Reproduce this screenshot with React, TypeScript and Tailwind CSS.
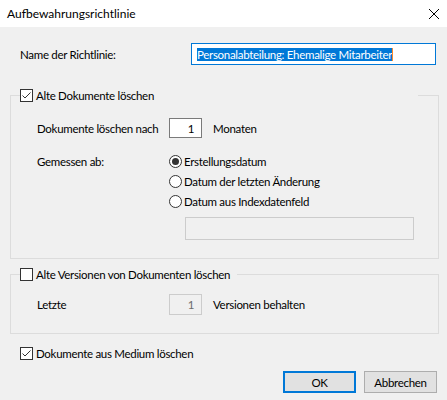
import type { ReactNode } from "react";

// Windows 10 style dialog, Segoe UI 9pt approximated with Lato.
const FONT = "font-[family-name:Lato,'Liberation_Sans',sans-serif]";

function CheckBox({ checked }: { checked?: boolean }) {
  return (
    <span className="flex size-[13px] shrink-0 items-center justify-center border border-[#333333] bg-white">
      {checked && (
        <svg width="11" height="11" viewBox="0 0 11 11" fill="none">
          <path d="M1.5 5.5 L4 8 L9.5 2.5" stroke="#333333" strokeWidth="1" />
        </svg>
      )}
    </span>
  );
}

function Radio({ checked, label }: { checked?: boolean; label: string }) {
  return (
    <div className="flex h-[20px] items-center gap-[2px]">
      <span className="flex size-[13px] shrink-0 items-center justify-center rounded-full border border-[#333333] bg-white">
        {checked && <span className="size-[7px] rounded-full bg-[#333333]" />}
      </span>
      <span>{label}</span>
    </div>
  );
}

function SpinBox({ value, disabled }: { value: string; disabled?: boolean }) {
  return (
    <div
      className={
        disabled
          ? "flex h-[21px] w-[33px] items-center justify-end border border-[#cccccc] bg-[#f0f0f0] pr-[7px] text-[#6d6d6d]"
          : "flex h-[20px] w-[33px] items-center justify-end border border-[#7a7a7a] bg-white pr-[7px]"
      }
    >
      {value}
    </div>
  );
}

function Group({
  label,
  checked,
  legendWidth,
  height,
  className,
  children,
}: {
  label: string;
  checked?: boolean;
  legendWidth: string;
  height: string;
  className?: string;
  children: ReactNode;
}) {
  return (
    <fieldset className={`border border-[#dcdcdc] ${height} ${className ?? ""}`}>
      <legend className={`ml-[9px] ${legendWidth}`}>
        <div className="flex h-[14px] items-center gap-[3px]">
          <CheckBox checked={checked} />
          <span>{label}</span>
        </div>
      </legend>
      <div className="pl-[26px]">{children}</div>
    </fieldset>
  );
}

export default function App() {
  return (
    <div className={`h-[400px] w-[447px] whitespace-nowrap bg-[#f0f0f0] text-black ${FONT}`}>
      <div className="flex h-[27px] items-center justify-between bg-white pl-[7px] pr-[8px] text-[12px] leading-[15px]">
        <span>Aufbewahrungsrichtlinie</span>
        <svg width="10" height="10" viewBox="0 0 10 10" fill="none">
          <path d="M0 0 L10 10 M10 0 L0 10" stroke="#000000" strokeWidth="1" />
        </svg>
      </div>

      <div className="pl-[10px] pr-[8px] text-[11.5px] leading-[15px] tracking-[-0.3px]">
        <div className="mt-[16px] flex h-[22px] items-center">
          <span className="w-[181px] pl-[10px]">Name der Richtlinie:</span>
          <div className="flex h-[22px] w-[245px] items-center border border-[#0078d7] bg-white pl-[5px]">
            <span className="bg-[#0078d7] leading-[13px] text-white">
              Personalabteilung: Ehemalige Mitarbeiter
            </span>
            <span className="h-[13px] w-px bg-[#ff8828]" />
          </div>
        </div>

        <Group
          label="Alte Dokumente löschen"
          checked
          legendWidth="w-[398px]"
          height="h-[171px]"
          className="mt-[23px]"
        >
          <div className="mt-[16px] flex h-[20px] items-center">
            <span className="w-[132px]">Dokumente löschen nach</span>
            <SpinBox value="1" />
            <span className="ml-[11px]">Monaten</span>
          </div>
          <div className="mt-[13px] flex">
            <span className="flex h-[20px] w-[132px] items-center">Gemessen ab:</span>
            <div className="flex flex-col">
              <Radio checked label="Erstellungsdatum" />
              <Radio label="Datum der letzten Änderung" />
              <Radio label="Datum aus Indexdatenfeld" />
            </div>
          </div>
          <div className="ml-[148px] mt-[6px] h-[23px] w-[229px] border border-[#cccccc] bg-[#f0f0f0]" />
        </Group>

        <Group
          label="Alte Versionen von Dokumenten löschen"
          legendWidth="w-[217px]"
          height="h-[67px]"
          className="mt-[8px]"
        >
          <div className="mt-[13px] flex h-[21px] items-center">
            <span className="w-[132px]">Letzte</span>
            <SpinBox value="1" disabled />
            <span className="ml-[11px]">Versionen behalten</span>
          </div>
        </Group>

        <div className="mt-[12px] flex h-[14px] items-center gap-[3px] pl-[10px]">
          <CheckBox checked />
          <span>Dokumente aus Medium löschen</span>
        </div>

        <div className="mr-[2px] mt-[11px] flex justify-end gap-[8px]">
          <button className="h-[22px] w-[73px] border-2 border-[#0078d7] bg-[#e1e1e1]">OK</button>
          <button className="h-[22px] w-[73px] border border-[#adadad] bg-[#e1e1e1]">Abbrechen</button>
        </div>
      </div>
    </div>
  );
}
